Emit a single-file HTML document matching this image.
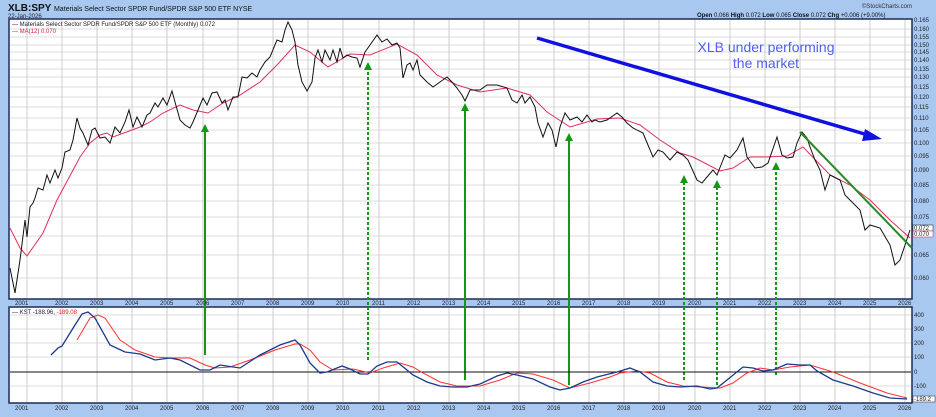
<!DOCTYPE html>
<html><head><meta charset="utf-8"><style>
body{margin:0;background:#a8c8f0;width:936px;height:412px;overflow:hidden;font-family:"Liberation Sans",sans-serif}
</style></head><body>
<svg width="936" height="412" xmlns="http://www.w3.org/2000/svg" font-family="Liberation Sans, sans-serif">
<rect width="936" height="412" fill="#a8c8f0"/>
<text x="8" y="11" font-size="10" font-weight="bold" fill="#111">XLB:SPY <tspan font-size="7" font-weight="normal">Materials Select Sector SPDR Fund/SPDR S&amp;P 500 ETF  NYSE</tspan></text>
<text x="8" y="18" font-size="6" fill="#222">22-Jan-2026</text>
<text x="912" y="8" font-size="6" fill="#333" text-anchor="end">©StockCharts.com</text>
<text x="697" y="17" font-size="6" fill="#111"><tspan font-weight="bold">Open</tspan> 0.066 <tspan font-weight="bold">High</tspan> 0.072 <tspan font-weight="bold">Low</tspan> 0.065 <tspan font-weight="bold">Close</tspan> 0.072 <tspan font-weight="bold">Chg</tspan> +0.006 (+9.00%)</text>
<rect x="9" y="19" width="903" height="280" fill="#fff" stroke="#1a2a5a" stroke-width="1.5"/>
<rect x="9" y="307" width="903" height="96" fill="#fff" stroke="#1a2a5a" stroke-width="1.5"/>
<g stroke="#ddd" stroke-width="1">
<path d="M10 29H911M10 37H911M10 45H911M10 52H911M10 60H911M10 69H911M10 77H911M10 87H911M10 97H911M10 107H911M10 118H911M10 130H911M10 143H911M10 156H911M10 170H911M10 185H911M10 201H911M10 217H911M10 236H911M10 255H911M10 278H911"/>
<path d="M10 315H911M10 329H911M10 343H911M10 357H911M10 386H911"/>
</g>
<g stroke="#ccc" stroke-width="1">
<path d="M27 20V298M62 20V298M97 20V298M132 20V298M167 20V298M203 20V298M238 20V298M273 20V298M308 20V298M343 20V298M379 20V298M414 20V298M449 20V298M484 20V298M519 20V298M554 20V298M589 20V298M624 20V298M659 20V298M695 20V298M730 20V298M765 20V298M800 20V298M835 20V298M870 20V298M905 20V298"/>
<path d="M27 308V402M62 308V402M97 308V402M132 308V402M167 308V402M203 308V402M238 308V402M273 308V402M308 308V402M343 308V402M379 308V402M414 308V402M449 308V402M484 308V402M519 308V402M554 308V402M589 308V402M624 308V402M659 308V402M695 308V402M730 308V402M765 308V402M800 308V402M835 308V402M870 308V402M905 308V402"/>
</g>
<text x="12" y="26" font-size="6" fill="#222">— Materials Select Sector SPDR Fund/SPDR S&amp;P 500 ETF (Monthly) 0.072</text>
<text x="12" y="33" font-size="6" fill="#d02050">— MA(12) 0.070</text>
<polyline fill="none" stroke="#e0305a" stroke-width="1" points="10,228 20,248 27,256 43,233 57,200 72,172 80,157 90,143 100,135 107,133 113,137 140,127 150,122 163,113 180,105 193,110 208,113 223,103 240,95 260,82 277,65 295,45 310,52 328,67 350,54 370,55 397,44 417,55 437,75 457,85 480,92 507,88 530,95 547,112 570,127 597,119 620,118 640,125 660,140 680,153 693,157 720,171 733,168 750,157 767,157 787,156 803,147 830,175 850,185 870,200 890,220 910,238"/>
<polyline fill="none" stroke="#111" stroke-width="1" points="10,268 15,293 20,260 25,220 27,237 30,207 33,203 35,198 38,188 43,190 47,175 50,183 55,170 58,178 62,168 65,152 70,150 73,140 77,118 80,128 83,133 88,145 92,130 95,128 100,138 105,137 110,143 115,127 120,133 125,122 129,110 133,127 137,117 142,127 147,115 150,113 155,103 158,107 163,98 167,105 172,91 175,102 180,120 185,125 190,128 193,122 198,110 203,98 207,105 212,93 217,92 222,103 225,100 228,110 233,97 238,97 242,77 247,78 252,73 257,77 260,70 265,62 270,57 277,40 282,42 285,30 288,22 292,30 295,42 298,65 302,82 307,91 312,82 315,58 318,50 322,62 325,50 330,60 333,50 337,62 340,48 343,58 347,55 352,57 357,58 360,67 365,52 370,45 377,35 382,42 387,39 392,45 397,43 400,48 403,78 407,65 410,63 413,70 417,60 420,75 427,82 433,87 440,82 447,77 452,82 457,88 462,95 465,101 470,90 475,90 480,90 487,85 497,85 507,88 512,100 517,103 522,95 525,103 530,97 535,107 538,123 543,137 548,123 552,130 556,147 560,127 565,113 570,120 577,117 582,122 587,115 592,122 595,120 600,122 607,120 617,113 622,117 627,123 633,128 643,133 648,145 653,157 658,150 663,152 670,160 677,152 683,155 688,160 697,180 702,183 707,177 713,170 717,175 725,155 730,158 737,150 743,138 747,157 755,168 762,167 768,163 777,137 782,155 787,158 793,157 797,143 802,132 807,138 810,147 815,160 820,170 825,190 830,175 840,180 845,195 850,200 860,210 865,230 870,225 880,228 890,245 895,265 900,260 905,245 910,230"/>
<line x1="800" y1="132" x2="912" y2="248" stroke="#2a8a2a" stroke-width="2"/>
<line x1="537" y1="38" x2="868" y2="135" stroke="#1010e0" stroke-width="3.5"/>
<polygon points="882,139 865,129 862,141" fill="#1010e0"/>
<text x="766" y="52" font-size="14" fill="#5060f0" text-anchor="middle">XLB under performing</text>
<text x="766" y="68" font-size="14" fill="#5060f0" text-anchor="middle">the market</text>
<g stroke="#119911" stroke-width="2" fill="#119911">
<line x1="205" y1="355" x2="205" y2="130"/><polygon points="201,132 209,132 205,124" stroke="none"/>
<line x1="465" y1="380" x2="465" y2="109"/><polygon points="461,111 469,111 465,103" stroke="none"/>
<line x1="569" y1="385" x2="569" y2="139"/><polygon points="565,141 573,141 569,133" stroke="none"/>
<g stroke-dasharray="3,2"><line x1="368" y1="360" x2="368" y2="68"/><line x1="684" y1="380" x2="684" y2="181"/><line x1="717" y1="385" x2="717" y2="186"/><line x1="776" y1="375" x2="776" y2="168"/></g>
<polygon points="364,70 372,70 368,62" stroke="none"/><polygon points="680,183 688,183 684,175" stroke="none"/><polygon points="713,188 721,188 717,180" stroke="none"/><polygon points="772,170 780,170 776,162" stroke="none"/>
</g>
<line x1="10" y1="372" x2="911" y2="372" stroke="#111" stroke-width="1"/>
<text x="12" y="314" font-size="6" fill="#224">— KST -188.96, <tspan fill="#e02020">-189.08</tspan></text>
<polyline fill="none" stroke="#ff3030" stroke-width="1" points="77,340 90,318 98,315 105,318 120,340 135,350 155,357 170,358 190,358 205,365 215,368 230,367 250,360 275,350 295,344 300,344 310,350 320,362 333,370 353,369 370,373 383,368 400,363 413,367 423,373 440,382 457,386 480,386 500,380 517,373 533,374 553,380 570,388 590,383 610,377 620,373 637,371 650,373 667,382 683,386 700,387 720,388 733,383 747,373 760,368 773,370 790,367 810,365 833,372 860,383 887,393 907,398"/>
<polyline fill="none" stroke="#1a3a8a" stroke-width="1.3" points="51,355 58,348 62,346 75,325 82,314 88,312 95,318 110,345 125,352 140,354 155,360 170,358 180,360 200,370 210,370 220,365 240,368 260,355 280,345 295,340 300,345 310,363 320,373 327,372 342,366 350,369 360,374 368,374 377,366 387,362 397,362 407,370 413,375 427,382 440,386 453,387 467,387 480,384 497,376 507,373 517,375 533,379 550,387 560,390 570,388 583,382 597,377 617,372 630,368 640,372 653,382 667,386 680,387 697,386 710,389 717,388 727,380 743,367 753,368 763,371 773,370 787,364 800,365 810,365 817,371 833,380 853,386 873,393 890,398 907,399"/>
<g font-size="6" fill="#222">
<g id="yr"><text x="15" y="305">2001</text><text x="55" y="305">2002</text><text x="90" y="305">2003</text><text x="125" y="305">2004</text><text x="160" y="305">2005</text><text x="196" y="305">2006</text><text x="231" y="305">2007</text><text x="266" y="305">2008</text><text x="301" y="305">2009</text><text x="336" y="305">2010</text><text x="372" y="305">2011</text><text x="407" y="305">2012</text><text x="442" y="305">2013</text><text x="477" y="305">2014</text><text x="512" y="305">2015</text><text x="547" y="305">2016</text><text x="582" y="305">2017</text><text x="617" y="305">2018</text><text x="652" y="305">2019</text><text x="688" y="305">2020</text><text x="723" y="305">2021</text><text x="758" y="305">2022</text><text x="793" y="305">2023</text><text x="828" y="305">2024</text><text x="863" y="305">2025</text><text x="898" y="305">2026</text></g>
<use href="#yr" y="105"/>
<text x="914" y="22">0.165</text><text x="914" y="31">0.160</text><text x="914" y="39">0.155</text><text x="914" y="47">0.150</text><text x="914" y="54">0.145</text><text x="914" y="62">0.140</text><text x="914" y="71">0.135</text><text x="914" y="79">0.130</text><text x="914" y="89">0.125</text><text x="914" y="99">0.120</text><text x="914" y="109">0.115</text><text x="914" y="120">0.110</text><text x="914" y="132">0.105</text><text x="914" y="145">0.100</text><text x="914" y="158">0.095</text><text x="914" y="172">0.090</text><text x="914" y="187">0.085</text><text x="914" y="203">0.080</text><text x="914" y="219">0.075</text><text x="914" y="257">0.065</text><text x="914" y="280">0.060</text>
<rect x="913" y="225" width="20" height="6" fill="#fff" stroke="#111" stroke-width="0.5"/><text x="914" y="230">0.072</text>
<rect x="913" y="231" width="20" height="6" fill="#fff" stroke="#d02050" stroke-width="0.5"/><text x="914" y="236">0.070</text>
<text x="914" y="317">400</text><text x="914" y="331">300</text><text x="914" y="345">200</text><text x="914" y="359">100</text><text x="914" y="374">0</text><text x="914" y="388">-100</text>
<rect x="913" y="396" width="22" height="6" fill="#fff" stroke="#223" stroke-width="0.5"/><text x="914" y="401">-189.2</text>
</g>
</svg>
</body></html>
